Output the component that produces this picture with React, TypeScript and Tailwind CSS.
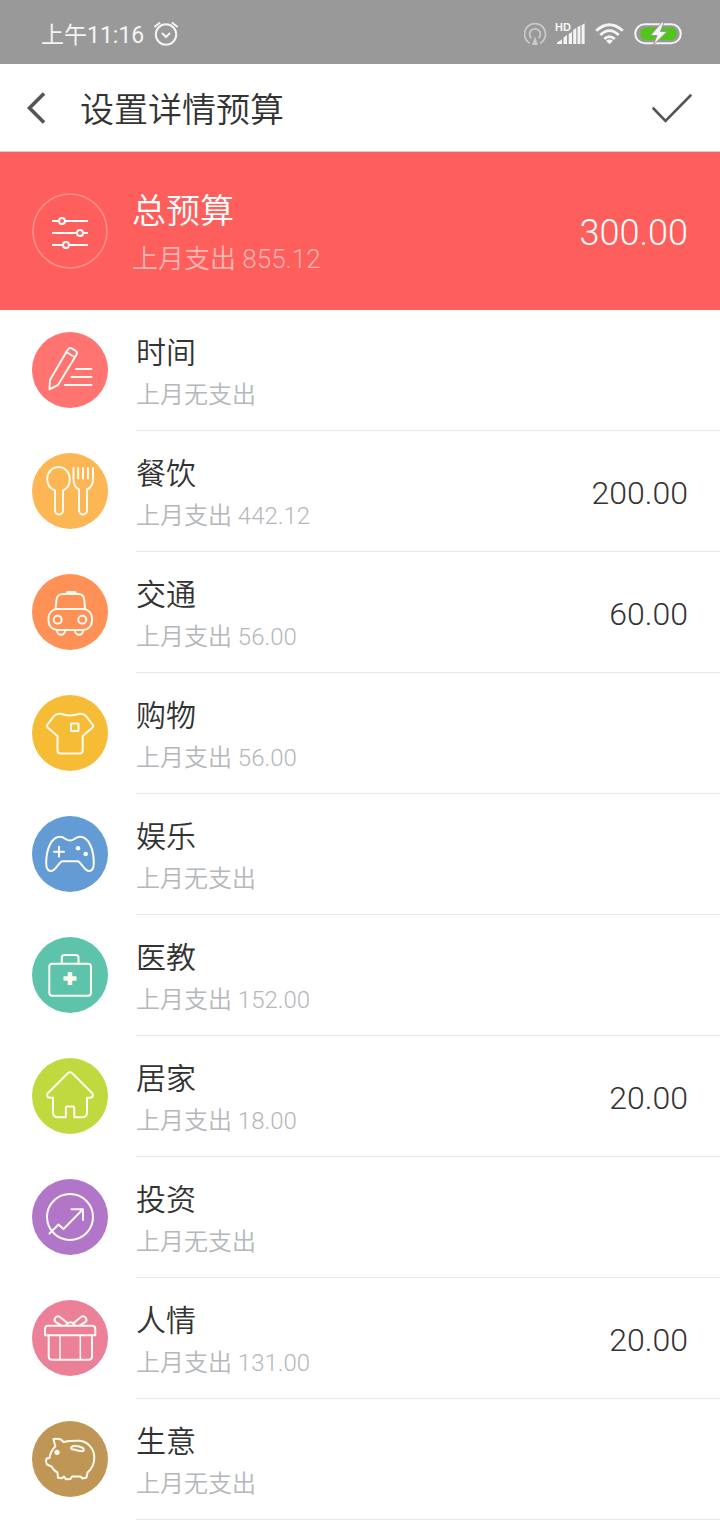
import type { ReactNode } from "react";

type Category = {
  name: string;
  note: string;
  amount?: string;
  color: string;
  icon: ReactNode;
};

const categories: Category[] = [
  {
    name: "时间",
    note: "上月无支出",
    color: "bg-[#ff7371]",
    icon: (
      <>
        <path d="M18 48 35.5 18Q37.5 15 40 16.5L43 18.3Q46 20 44.3 23L26 53 17.5 57.3ZM35 20.5 42.5 25" />
        <path d="M44 37H59.5M39.5 45H59.5M33 53H59.5" />
      </>
    ),
  },
  {
    name: "餐饮",
    note: "上月支出 442.12",
    amount: "200.00",
    color: "bg-[#fcb653]",
    icon: (
      <>
        <path d="M23 37.5C18 35.5 15.2 31 15.2 26A11.3 12 0 0 1 37.8 26C37.8 31 35.5 35.5 31 37.5V57.5A4 4 0 0 1 23 57.5Z" />
        <path d="M41.5 15V26Q41.5 34 47 36.5V57.5A4 4 0 0 0 55 57.5V36.5Q61 34 61 26V15M46.2 15V25.5M51 15V25.5M56 15V25.5" />
      </>
    ),
  },
  {
    name: "交通",
    note: "上月支出 56.00",
    amount: "60.00",
    color: "bg-[#ff9157]",
    icon: (
      <>
        <path d="M23.5 35 24.5 26Q25.2 20 31 20H46Q51.8 20 52.3 26L53 35" />
        <path d="M35.5 18.5H43" strokeWidth="3" />
        <rect x="16.5" y="35" width="43.5" height="21" rx="9" />
        <circle cx="25.7" cy="45.7" r="4" />
        <circle cx="50.3" cy="45.7" r="4" />
        <path d="M25 56.5A4 4.2 0 0 0 33 56.5M43 56.5A4 4.2 0 0 0 51 56.5" />
      </>
    ),
  },
  {
    name: "购物",
    note: "上月支出 56.00",
    color: "bg-[#f6bc35]",
    icon: (
      <>
        <path d="M28.5 18.8Q38 22.3 47.5 18.8 51.5 18.2 54 21L60.5 29.5Q62 31 60.5 32.5L50.7 41V55.5Q50.7 58.5 47.7 58.5H28.5Q25.5 58.5 25.5 55.5V41L15.6 32.5Q14.2 31 15.5 29.5L22 21Q24.5 18.2 28.5 18.8Z" />
        <rect x="39" y="28.5" width="7.5" height="7.5" rx="0.5" />
      </>
    ),
  },
  {
    name: "娱乐",
    note: "上月无支出",
    color: "bg-[#639bd4]",
    icon: (
      <>
        <path d="M38 24.5C33.5 24.5 33 20.8 28 20.8 19 20.8 14.2 34 14.2 47 14.2 52.5 16 55 19 55 23.5 55 25.5 48 30 45.2H46C50.5 48 52.5 55 57 55 60 55 61.8 52.5 61.8 47 61.8 34 57 20.8 48 20.8 43 20.8 42.5 24.5 38 24.5Z" />
        <path d="M22 35.7H32M27 30.7V40.7" />
        <g fill="currentColor" stroke="none">
          <circle cx="46" cy="32.3" r="2.3" />
          <circle cx="53.7" cy="38" r="2.3" />
        </g>
      </>
    ),
  },
  {
    name: "医教",
    note: "上月支出 152.00",
    color: "bg-[#5dc4ab]",
    icon: (
      <>
        <rect x="17.3" y="26.8" width="41.7" height="32" rx="3" />
        <path d="M29.8 26.5V20.5Q29.8 18 32.3 18H44Q46.5 18 46.5 20.5V26.5" />
        <path d="M31.5 41.5H44.5M38 35V48" strokeWidth="4.5" strokeLinecap="butt" />
      </>
    ),
  },
  {
    name: "居家",
    note: "上月支出 18.00",
    amount: "20.00",
    color: "bg-[#bfd93e]",
    icon: (
      <path d="M36 15Q38 13.4 40 15L60.5 35.5Q62 39.5 58 39.7H55V54.5Q55 59.3 50 59.3H42.3V50Q42.3 48.5 40.8 48.5H35.3Q33.8 48.5 33.8 50V59.3H26Q21 59.3 21 54.5V39.7H18Q14 39.5 15.5 35.5Z" />
    ),
  },
  {
    name: "投资",
    note: "上月无支出",
    color: "bg-[#b176c8]",
    icon: (
      <>
        <circle cx="38" cy="38" r="23" />
        <path d="M17.5 54.5 26.5 45.5 31.5 50 50.7 30.5M39.5 30.3H51V41" />
      </>
    ),
  },
  {
    name: "人情",
    note: "上月支出 131.00",
    amount: "20.00",
    color: "bg-[#ec8099]",
    icon: (
      <>
        <path d="M13 35.3V29Q13 25.7 16.3 25.7H60Q63.3 25.7 63.3 29V35.3ZM16.7 35.3V56.5Q16.7 59.7 20 59.7H56.5Q60 59.7 60 56.5V35.3" />
        <path d="M28 35.5V59.5M48.3 35.5V59.5" strokeWidth="1.5" />
        <path d="M29 25.3 23.5 21.8Q21.5 20 23.5 17.5 25.5 15.2 28 17L36 23.5M48 25.3 53.5 21.8Q55.5 20 53.5 17.5 51.5 15.2 49 17L41 23.5M34 25.2Q38.5 19.5 43 25.2" />
      </>
    ),
  },
  {
    name: "生意",
    note: "上月无支出",
    color: "bg-[#c09656]",
    icon: (
      <>
        <path d="M21.5 18Q25 17.3 29 18.5L31.5 21Q38 19.5 47 19.8C56 20.3 62.3 28 62.3 36.5Q62.3 46 55.5 51.5L54.5 56.5 50.5 57.5 48.5 55.5H40L38.5 58 34 58.3 32 55.5 30 57.3 26 56.8 25.5 51.5Q21.5 49.5 19.5 45.5L15 43.5Q13.2 40.5 14.5 37.5L17.5 37Q18.5 30 23.3 25.5Z" />
        <path d="M40.5 25.3Q46 24.5 51 27 52.8 29.5 50.5 30.3L46.5 29.8Q43.5 28.5 40 28.3 38 26.8 40.5 25.3Z" />
        <circle cx="25" cy="31.3" r="2.6" fill="currentColor" stroke="none" />
      </>
    ),
  },
];

function StatusBar() {
  return (
    <div className="flex h-16 items-center justify-between bg-[#999999] pt-1 pr-[37px] pl-[41px] text-[#f4f4f4]">
      <div className="flex items-center gap-2.5">
        <span className="pt-1 text-[23px] leading-8">上午11:16</span>
        <svg className="size-6" viewBox="0 0 24 24" fill="none" stroke="currentColor" strokeWidth="2" strokeLinecap="round" aria-hidden="true">
          <circle cx="12" cy="12.5" r="10.2" />
          <path d="M8.5 11.5 12 15 15.5 11.5M1 4.5 5.5 1M23 4.5 18.5 1" />
        </svg>
      </div>
      <div className="flex items-center gap-[9px]" aria-hidden="true">
        <svg className="size-6 text-[#c9c9c9]" viewBox="1 0 24 24" fill="none" stroke="currentColor" strokeWidth="1.8">
          <path d="M6.8 21.2A10.5 10.5 0 1 1 17.2 21.2" />
          <path d="M8.5 16.3A5.4 5.4 0 1 1 15.5 16.3" />
          <path d="M12 14.5 15 23H9Z" fill="currentColor" stroke="none" />
        </svg>
        <svg className="h-6 w-[29px] overflow-visible" viewBox="1 0 29 24" fill="currentColor">
          <text x="-1" y="8.5" fontSize="11" fontWeight="700" fontFamily="Liberation Sans, sans-serif">HD</text>
          <path d="M1 22V20.5L6 17.5V22ZM7.5 22V15.5L11 13V22ZM12.7 22V12L16 10V22ZM17.2 22V8L20.3 6V22ZM21.5 22V5L24.4 3.5V22ZM25.6 22V3L28.6 1.5V22Z" />
        </svg>
        <svg className="h-6 w-[29px]" viewBox="0 0 29 24" fill="none" stroke="currentColor" strokeWidth="2.8">
          <path d="M1.2 8.7Q14.5-3.3 27.8 8.7M5.3 13Q14.5 4.3 23.7 13M9.3 17Q14.5 12.2 19.7 17" />
          <path d="M14.5 22.2 11 18.8Q14.5 16.3 18 18.8Z" fill="currentColor" stroke="none" />
        </svg>
        <svg className="h-6 w-[50px]" viewBox="0 0 50 24">
          <rect x="2.2" y="2.2" width="45.6" height="19" rx="9.5" fill="none" stroke="currentColor" strokeWidth="2" />
          <rect x="7.5" y="5.5" width="36" height="12.5" rx="5" fill="#52c41a" />
          <path d="M29 0 17.5 13.5H24L20 23.5 34 9.5H27.5L31 0Z" fill="currentColor" stroke="#999999" strokeWidth="1" />
        </svg>
      </div>
    </div>
  );
}

function Header() {
  return (
    <header className="flex h-22 items-center border-b border-[#d9cccc] bg-white text-[#555555]">
      <button type="button" aria-label="返回" className="flex h-full w-20 items-center pl-6">
        <svg className="h-8 w-6" viewBox="0 0 24 32" fill="none" stroke="currentColor" strokeWidth="3.6" aria-hidden="true">
          <path d="M20 1.5 5.5 16 20 30.5" />
        </svg>
      </button>
      <h1 className="flex-1 pt-1 text-[34px] leading-10 font-[350] text-[#333333]">设置详情预算</h1>
      <button type="button" aria-label="确定" className="flex h-full items-center px-7">
        <svg className="h-8 w-10" viewBox="0 0 40 32" fill="none" stroke="currentColor" strokeWidth="2.6" strokeLinecap="round" aria-hidden="true">
          <path d="M1.5 16.5 13.5 29 38.5 3.5" />
        </svg>
      </button>
    </header>
  );
}

function TotalBudget() {
  return (
    <button type="button" className="flex h-[158px] w-full items-center bg-[#ff5f5c] px-8 text-left text-white">
      <svg className="size-[76px] shrink-0" viewBox="0 0 76 76" fill="none" stroke="currentColor" strokeWidth="2" aria-hidden="true">
        <circle cx="38" cy="38" r="37" strokeOpacity="0.3" strokeWidth="1.6" />
        <path d="M20 28H27M33 28H56M20 40H45M51 40H56M20 52H31M37 52H56" />
        <circle cx="30" cy="28" r="3" />
        <circle cx="48" cy="40" r="3" />
        <circle cx="34" cy="52" r="3" />
      </svg>
      <span className="ml-6 flex flex-1 flex-col gap-2 pt-1">
        <span className="text-[34px] leading-[44px] font-[350]">总预算</span>
        <span className="text-[26px] leading-9 font-[350] text-[#ffb5b3]">上月支出 855.12</span>
      </span>
      <span className="pt-1 text-[36px] leading-10 font-light">300.00</span>
    </button>
  );
}

function CategoryRow({ name, note, amount, color, icon }: Category) {
  return (
    <li>
      <button type="button" className="flex w-full items-stretch pl-8 text-left">
        <span className={`mt-[22px] size-[76px] shrink-0 rounded-full text-[#fffaf0] ${color}`}>
          <svg className="size-full" viewBox="0 0 76 76" fill="none" stroke="currentColor" strokeWidth="2" strokeLinecap="round" strokeLinejoin="round" aria-hidden="true">
            {icon}
          </svg>
        </span>
        <span className="ml-7 flex h-[121px] flex-1 items-center justify-between border-b border-[#e8e8e8] pt-1 pr-8">
          <span className="flex flex-col gap-1.5">
            <span className="text-[30px] leading-10 font-[350] text-[#333333]">{name}</span>
            <span className="text-[24px] leading-8 font-[350] text-[#b4b7bb]">{note}</span>
          </span>
          {amount && <span className="text-[32px] leading-10 font-light text-[#333333]">{amount}</span>}
        </span>
      </button>
    </li>
  );
}

export default function App() {
  return (
    <div className="min-h-screen bg-white font-[Roboto,'Noto_Sans_CJK_SC',sans-serif]">
      <StatusBar />
      <Header />
      <main>
        <TotalBudget />
        <ul>
          {categories.map((category) => (
            <CategoryRow key={category.name} {...category} />
          ))}
        </ul>
      </main>
    </div>
  );
}
